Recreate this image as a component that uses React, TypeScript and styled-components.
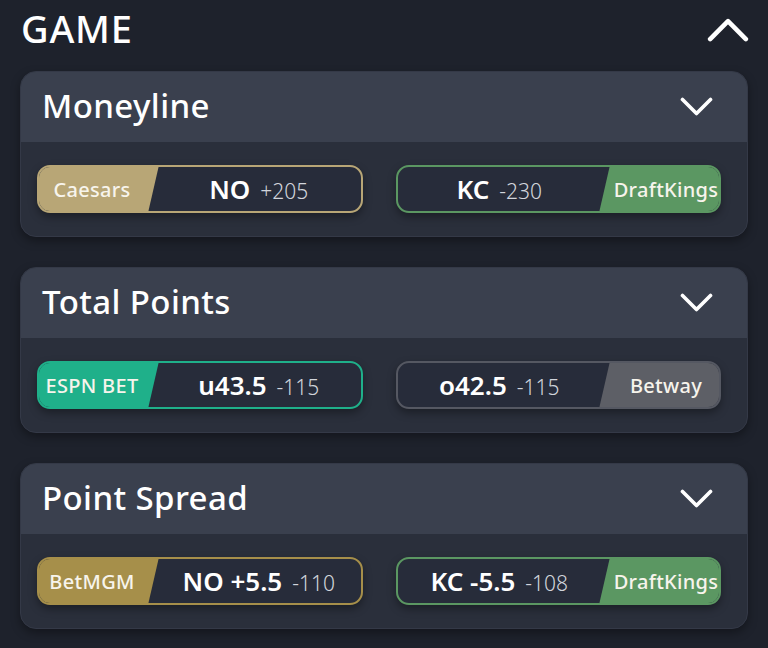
import React from "react";
import styled, { createGlobalStyle } from "styled-components";

const Global = createGlobalStyle`
  html, body { margin: 0; padding: 0; background: #1e222c; }
  body { font-family: "Noto Sans", "Lato", sans-serif; color: #fff; }
`;

const Page = styled.div`
  width: 768px;
  height: 648px;
  box-sizing: border-box;
  padding: 0 20px;
  background: #1e222c;
  overflow: hidden;
`;

const TopBar = styled.div`
  height: 71px;
  display: flex;
  align-items: flex-start;
  justify-content: space-between;
`;

const Title = styled.h1`
  margin: 4px 0 0 1px;
  font-size: 38px;
  font-weight: 500;
  letter-spacing: 0.8px;
  line-height: 48px;
  color: #ffffff;
`;

const Stack = styled.div`
  display: flex;
  flex-direction: column;
  gap: 30px;
`;

const Card = styled.section`
  border-radius: 16px;
  overflow: hidden;
  background: #2a2f3b;
  border: 1px solid #343947;
  box-shadow: 0 4px 10px rgba(0, 0, 0, 0.35);
`;

const CardHeader = styled.div`
  height: 70px;
  box-sizing: border-box;
  background: #3a404e;
  display: flex;
  align-items: center;
  justify-content: space-between;
  padding: 0 34px 0 21px;
`;

const CardTitle = styled.h2`
  margin: 0 0 2px 0;
  font-size: 33px;
  font-weight: 500;
  letter-spacing: 0.4px;
  color: #ffffff;
  line-height: 44px;
`;

const CardBody = styled.div`
  height: 94px;
  box-sizing: border-box;
  display: grid;
  grid-template-columns: 1fr 1fr;
  column-gap: 33px;
  align-items: center;
  padding: 0 26px 0 16px;
`;

const Odd = styled.div<{ $accent: string; $right?: boolean }>`
  height: 48px;
  box-sizing: border-box;
  border: 2px solid ${(p) => p.$accent};
  border-radius: 13px;
  background: #272c3a;
  display: flex;
  align-items: stretch;
  flex-direction: ${(p) => (p.$right ? "row-reverse" : "row")};
  overflow: hidden;
  box-shadow: 0 4px 8px rgba(0, 0, 0, 0.35);
`;

const Book = styled.div<{ $bg: string; $right?: boolean }>`
  width: 122px;
  flex: 0 0 auto;
  margin: -2px;
  background: ${(p) => p.$bg};
  clip-path: ${(p) =>
    p.$right
      ? "polygon(11px 0, 100% 0, 100% 100%, 0 100%)"
      : "polygon(0 0, 100% 0, calc(100% - 11px) 100%, 0 100%)"};
  display: flex;
  align-items: center;
  justify-content: center;
  padding: ${(p) => (p.$right ? "0 0 0 12px" : "0 12px 0 0")};
  box-sizing: border-box;
  font-size: 20px;
  font-weight: 500;
  letter-spacing: 0.3px;
  color: #f7f4ec;
  white-space: nowrap;
`;

const Line = styled.div`
  flex: 1;
  display: flex;
  align-items: center;
  justify-content: center;
`;

const LineInner = styled.div`
  display: flex;
  align-items: baseline;
  gap: 10px;
`;

const Pick = styled.span`
  font-size: 26px;
  font-weight: 600;
  color: #ffffff;
`;

const Price = styled.span`
  font-size: 21px;
  font-weight: 300;
  color: #d2d5dc;
`;

const Chevron = ({ up, size }: { up?: boolean; size: number }) => (
  <svg
    width={size}
    height={size * 0.6}
    viewBox="0 0 40 24"
    fill="none"
    stroke="#fff"
    strokeWidth={4.4}
    strokeLinecap="round"
    strokeLinejoin="round"
  >
    {up ? <polyline points="3,21 20,4 37,21" /> : <polyline points="3,3 20,20 37,3" />}
  </svg>
);

const UpWrap = styled.div`
  margin-top: 17px;
  margin-right: -1px;
`;

type Side = { book: string; bg: string; accent: string; pick: string; price: string };
type Market = { title: string; left: Side; right: Side };

const markets: Market[] = [
  {
    title: "Moneyline",
    left: { book: "Caesars", bg: "#b8a676", accent: "#b8a676", pick: "NO", price: "+205" },
    right: { book: "DraftKings", bg: "#5b9762", accent: "#5b9762", pick: "KC", price: "-230" },
  },
  {
    title: "Total Points",
    left: { book: "ESPN BET", bg: "#1fb08a", accent: "#1fb08a", pick: "u43.5", price: "-115" },
    right: { book: "Betway", bg: "#5d5f66", accent: "#555862", pick: "o42.5", price: "-115" },
  },
  {
    title: "Point Spread",
    left: { book: "BetMGM", bg: "#a68f4a", accent: "#a68f4a", pick: "NO +5.5", price: "-110" },
    right: { book: "DraftKings", bg: "#5b9762", accent: "#5b9762", pick: "KC -5.5", price: "-108" },
  },
];

const OddButton = ({ side, right }: { side: Side; right?: boolean }) => (
  <Odd $accent={side.accent} $right={right}>
    <Book $bg={side.bg} $right={right}>
      {side.book}
    </Book>
    <Line>
      <LineInner>
        <Pick>{side.pick}</Pick>
        <Price>{side.price}</Price>
      </LineInner>
    </Line>
  </Odd>
);

export default function App() {
  return (
    <Page>
      <Global />
      <TopBar>
        <Title>GAME</Title>
        <UpWrap>
          <Chevron up size={42} />
        </UpWrap>
      </TopBar>
      <Stack>
        {markets.map((m) => (
          <Card key={m.title}>
            <CardHeader>
              <CardTitle>{m.title}</CardTitle>
              <Chevron size={33} />
            </CardHeader>
            <CardBody>
              <OddButton side={m.left} />
              <OddButton side={m.right} right />
            </CardBody>
          </Card>
        ))}
      </Stack>
    </Page>
  );
}
